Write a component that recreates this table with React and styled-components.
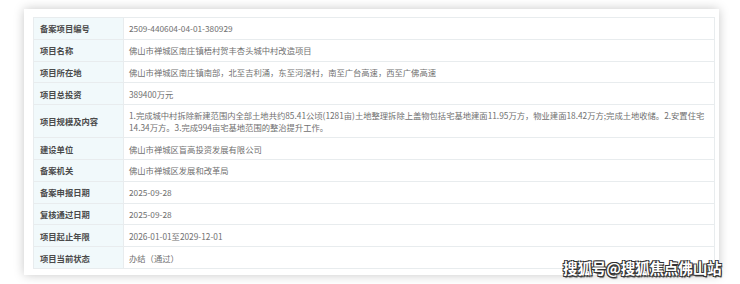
import React from 'react';
import styled, { createGlobalStyle } from 'styled-components';

const GlobalStyle = createGlobalStyle`
  html, body {
    margin: 0;
    padding: 0;
    background: #ffffff;
  }
  body {
    font-family: "Noto Sans CJK SC", "Noto Sans", sans-serif;
  }
`

const Page = styled.div`
  position: relative;
  width: 740px;
  height: 284px;
  overflow: hidden;
  padding: 9px 0 0 24px;
  box-sizing: border-box;
`

const Card = styled.div`
  width: 695px;
  height: 266px;
  box-sizing: border-box;
  padding: 8px 4px 6px 9px;
  background: #ffffff;
  box-shadow: 0 0 10px rgba(0, 0, 0, 0.22);
`

const Table = styled.table`
  width: 682px;
  border-collapse: collapse;
  table-layout: fixed;
  border: 1px solid #e8ecee;
  font-size: 8.3px;
`

const Row = styled.tr`
  height: ${p => (p.$tall ? '33px' : '21.8px')};
`

const Label = styled.td`
  width: 90px;
  box-sizing: border-box;
  padding: 0 0 0 6px;
  background: #f1f9fb;
  border: 1px solid #e8ecee;
  color: #4a4a4a;
  font-weight: 700;
  line-height: 12px;
  vertical-align: middle;
`

const Value = styled.td`
  padding: 0 6px 0 5px;
  border: 1px solid #e8ecee;
  color: #707070;
  line-height: 12px;
  white-space: nowrap;
  overflow: hidden;
  vertical-align: middle;
`

const Watermark = styled.div`
  position: absolute;
  left: 563px;
  top: 257px;
  font-size: 14.6px;
  font-weight: 700;
  color: #ffffff;
  letter-spacing: -0.2px;
  white-space: nowrap;
  text-shadow:
    1px 1px 0 #333,
    -1px 1px 0 #333,
    1px -1px 0 #333,
    -1px -1px 0 #333,
    1px 2px 1px rgba(0, 0, 0, 0.5);
`

const rows = [
  ['备案项目编号', '2509-440604-04-01-380929'],
  ['项目名称', '佛山市禅城区南庄镇梧村贺丰杏头城中村改造项目'],
  ['项目所在地', '佛山市禅城区南庄镇南部，北至吉利涌，东至河滘村，南至广台高速，西至广佛高速'],
  ['项目总投资', '389400万元'],
  ['项目规模及内容', null],
  ['建设单位', '佛山市禅城区盲高投资发展有限公司'],
  ['备案机关', '佛山市禅城区发展和改革局'],
  ['备案申报日期', '2025-09-28'],
  ['复核通过日期', '2025-09-28'],
  ['项目起止年限', '2026-01-01至2029-12-01'],
  ['项目当前状态', '办结（通过）'],
]

export default function App() {
  return (
    <>
      <GlobalStyle />
      <Page>
        <Card>
          <Table>
            <tbody>
              {rows.map(([label, value]) => (
                <Row key={label} $tall={value === null}>
                  <Label>{label}</Label>
                  <Value>
                    {value === null ? (
                      <>
                        1.完成城中村拆除新建范围内全部土地共约85.41公顷(1281亩)土地整理拆除上盖物包括宅基地建面11.95万方，物业建面18.42万方;完成土地收储。2.安置住宅
                        <br />
                        14.34万方。3.完成994亩宅基地范围的整治提升工作。
                      </>
                    ) : value}
                  </Value>
                </Row>
              ))}
            </tbody>
          </Table>
        </Card>
        <Watermark>搜狐号@搜狐焦点佛山站</Watermark>
      </Page>
    </>
  )
}
